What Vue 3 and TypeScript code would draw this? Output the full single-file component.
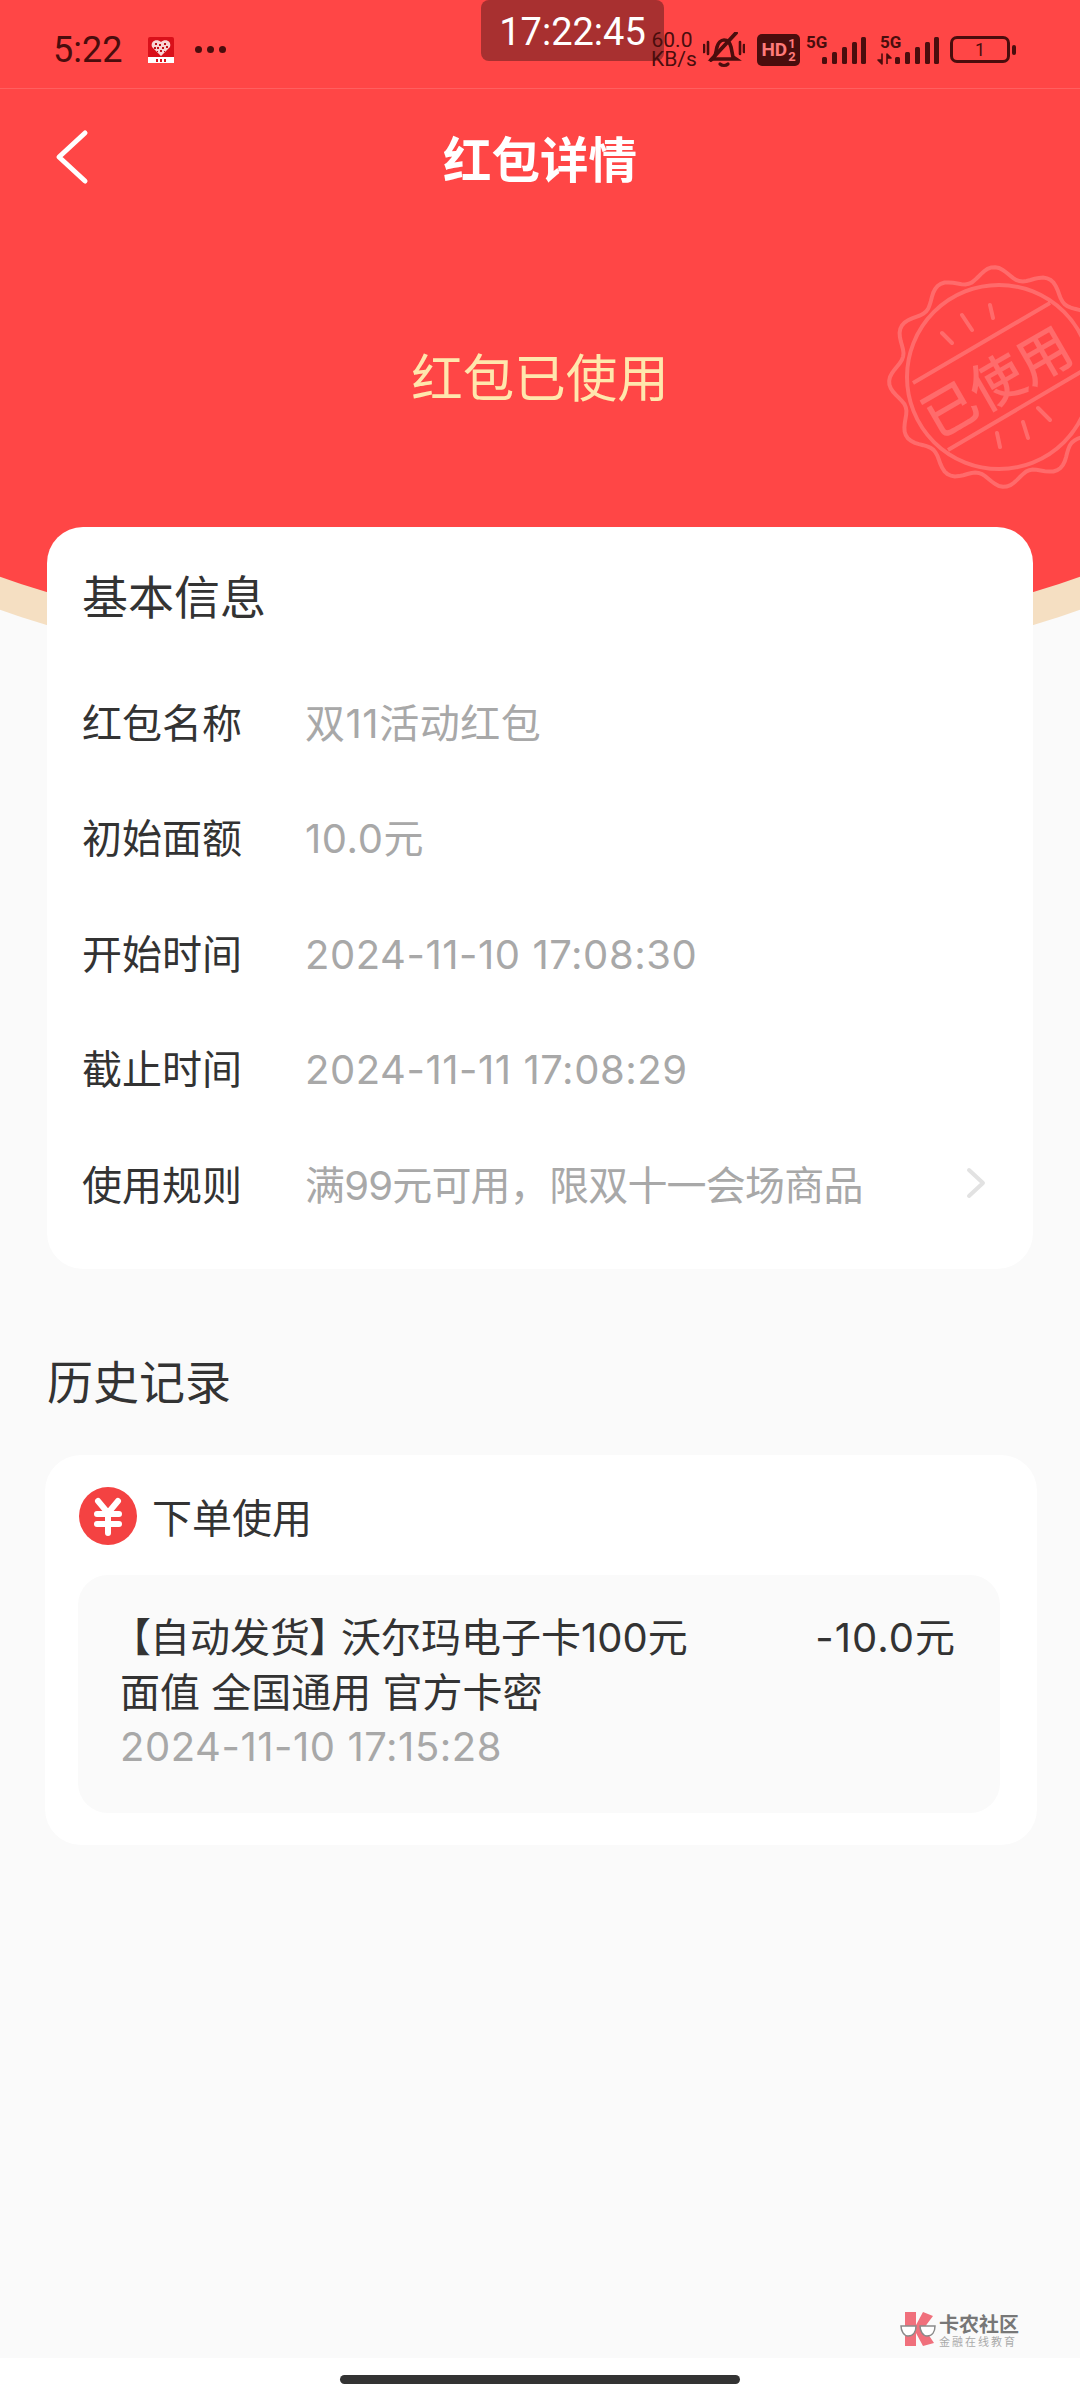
<script setup lang="ts">
const infoRows = [
  { label: '红包名称', value: '双11活动红包' },
  { label: '初始面额', value: '10.0元' },
  { label: '开始时间', value: '2024-11-10 17:08:30' },
  { label: '截止时间', value: '2024-11-11 17:08:29' },
  { label: '使用规则', value: '满99元可用，限双十一会场商品', more: true },
]

// wavy seal outline for the stamp
const sealPath = (() => {
  const pts: string[] = []
  for (let i = 0; i <= 180; i++) {
    const a = (i / 180) * Math.PI * 2
    const r = 104 + 6 * Math.cos(a * 12 + 0.6)
    const x = 120 + r * Math.cos(a)
    const y = 120 + r * Math.sin(a)
    pts.push(`${i ? 'L' : 'M'}${x.toFixed(1)} ${y.toFixed(1)}`)
  }
  return pts.join(' ') + ' Z'
})()

const signalBars = [
  { x: 16, h: 7 },
  { x: 26, h: 12 },
  { x: 36, h: 17 },
  { x: 46, h: 22 },
  { x: 55, h: 27 },
]
</script>

<template>
  <div class="page">
    <div class="hero">
      <div class="hero-cream"></div>
      <div class="hero-red"></div>
    </div>

    <div class="clock-overlay">17:22:45</div>

    <div class="statusbar">
      <div class="status-left">
        <span class="status-time">5:22</span>
        <svg class="app-badge" width="26" height="26" viewBox="0 0 26 26">
          <rect width="26" height="26" rx="2" fill="#d9101a" />
          <rect y="20" width="26" height="6" fill="#fff" />
          <path d="M13 19 L4 10 C2 4 9 1 13 5 C17 1 24 4 22 10 Z" fill="#f8d4d4" />
          <path d="M7 6h2v2H7zM11 7h2v2h-2zM16 6h2v2h-2zM9 10h2v2H9zM14 10h2v2h-2zM18 9h2v2h-2zM6 10h2v2H6zM12 13h2v2h-2zM9 14h1v1H9zM16 14h1v1h-1z" fill="#c01018" />
          <path d="M8 22h2v3H8zM12 22h2v3h-2zM16 22h2v3h-2z" fill="#d9101a" />
        </svg>
        <span class="status-dots"><i></i><i></i><i></i></span>
      </div>
      <div class="status-right">
        <div class="netspeed"><span>60.0</span><span>KB/s</span></div>
        <svg class="mute" width="42" height="36" viewBox="0 0 42 36" fill="none" stroke="#4a0d0d" stroke-linecap="round">
          <path d="M11 25c2-2 2-6 3-10 1-4 4-7 7-7 4 0 6 3 7 7l2 10 3 2H9z" stroke-width="3.6" />
          <path d="M17 32c2 2 6 2 8 0" stroke-width="3.2" />
          <path d="M8 28L33 1" stroke-width="3.8" />
          <path d="M1 13v7M5 10v12M37 10v12M41 13v7" stroke-width="2.6" />
        </svg>
        <div class="hd"><b>HD</b><span><em>1</em><em>2</em></span></div>
        <svg class="signal" width="60" height="32" viewBox="0 0 60 32">
          <text x="0" y="14" class="five-g">5G</text>
          <rect v-for="bar in signalBars" :key="bar.x" :x="bar.x" :y="30 - bar.h" width="5" :height="bar.h" rx="1.5" />
        </svg>
        <svg class="signal" width="60" height="32" viewBox="0 0 60 32">
          <text x="2" y="14" class="five-g">5G</text>
          <path d="M4 20v10l-4-4h4zM9 20v10M9 20l4 4H9z" stroke="#4a0d0d" stroke-width="1.6" stroke-linejoin="round" fill="#4a0d0d" />
          <rect v-for="bar in signalBars" :key="bar.x" :x="bar.x + 1" :y="30 - bar.h" width="5" :height="bar.h" rx="1.5" />
        </svg>
        <div class="battery"><span class="battery-body">1</span><i></i></div>
      </div>
    </div>

    <header class="navbar">
      <svg class="back" width="40" height="56" viewBox="0 0 40 56" fill="none" stroke="#fff" stroke-width="5" stroke-linecap="round" stroke-linejoin="round">
        <path d="M31 4 L5 28 L31 52" />
      </svg>
      <h1>红包详情</h1>
    </header>

    <div class="state">红包已使用</div>

    <svg class="stamp" width="240" height="240" viewBox="0 0 240 240" fill="none" stroke="#fff" stroke-opacity="0.2" stroke-width="4">
      <path :d="sealPath" />
      <circle cx="120" cy="120" r="92" />
      <path d="M34 126 L171 46 M69 193 L205 113" />
      <path d="M63 76l10 10M83 58l10 15M111 48l3 13M159 151l12 12M144 165l5 16M118 176l3 14" stroke-linecap="round" />
      <text x="116" y="122" class="stamp-text" transform="rotate(-30 116 122)" text-anchor="middle" dominant-baseline="central">已使用</text>
    </svg>

    <main class="content">
      <section class="card info-card">
        <h2>基本信息</h2>
        <div v-for="row in infoRows" :key="row.label" class="info-row">
          <span class="info-label">{{ row.label }}</span>
          <span class="info-value" :class="{ rule: row.more }">{{ row.value }}</span>
          <svg v-if="row.more" class="chevron" width="20" height="32" viewBox="0 0 20 32" fill="none" stroke="#e2e2e2" stroke-width="4" stroke-linecap="round" stroke-linejoin="round">
            <path d="M3 3 L17 16 L3 29" />
          </svg>
        </div>
      </section>

      <h2 class="history-title">历史记录</h2>

      <section class="card history-card">
        <div class="history-head">
          <svg width="58" height="58" viewBox="0 0 58 58">
            <circle cx="29" cy="29" r="29" fill="#f44242" />
            <path d="M19 14 L29 26 L39 14 M18 27 H40 M18 37 H40 M29 26 V46" fill="none" stroke="#fff" stroke-width="6" stroke-linecap="round" stroke-linejoin="round" />
          </svg>
          <span>下单使用</span>
        </div>
        <div class="record">
          <div class="record-main">
            <div class="record-name"><span class="bracket-open">【</span>自动发货<span class="bracket-close">】</span>沃尔玛电子卡100元面值 全国通用 官方卡密</div>
            <div class="record-time">2024-11-10 17:15:28</div>
          </div>
          <div class="record-amount">-10.0元</div>
        </div>
      </section>
    </main>

    <div class="watermark">
      <svg width="36" height="36" viewBox="0 0 36 36">
        <path d="M5 0h11v13L23 0l10 4-9 12 10 15-11 3-7-13v13H5z" fill="#f0707c" />
        <path d="M1 14 H16 C16 20 13 24 8 24 C4 24 1 19 1 14 Z M20 14 H35 C35 20 32 24 27 24 C23 24 20 19 20 14 Z" fill="#fff" stroke="#8a8a8a" stroke-width="1.5" />
      </svg>
      <div class="wm-text"><b>卡农社区</b><small>金融在线教育</small></div>
    </div>

    <footer class="gesture"><i></i></footer>
  </div>
</template>

<style scoped>
.page {
  position: relative;
  width: 1080px;
  height: 2400px;
  overflow: hidden;
  display: flex;
  flex-direction: column;
  background: #fafafa;
  font-family: Inter, "Noto Sans CJK SC", sans-serif;
}
.hero {
  position: absolute;
  top: 0;
  left: 0;
  width: 1080px;
  height: 700px;
  overflow: hidden;
}
.hero-cream,
.hero-red {
  position: absolute;
  top: 0;
  left: -160px;
  width: 1400px;
  border-radius: 0 0 700px 700px / 0 0 210px 210px;
}
.hero-cream {
  height: 686px;
  background: #f5dfc2;
}
.hero-red {
  height: 653px;
  background: #ff4646;
}
.clock-overlay {
  position: absolute;
  top: 0;
  left: 481px;
  width: 183px;
  height: 61px;
  border-radius: 8px;
  background: #a83030;
  color: #fff;
  font-family: Roboto, sans-serif;
  font-size: 38px;
  line-height: 64px;
  text-align: center;
}
.statusbar {
  position: relative;
  height: 89px;
  flex: none;
  display: flex;
  justify-content: space-between;
  align-items: center;
  padding: 11px 64px 0 53px;
  box-sizing: border-box;
  border-bottom: 1px solid rgba(255, 255, 255, 0.14);
  color: #4a0d0d;
}
.status-left {
  display: flex;
  align-items: center;
}
.status-time {
  width: 95px;
  font-family: Roboto, sans-serif;
  font-size: 36px;
}
.app-badge {
  margin-right: 21px;
}
.status-dots {
  display: flex;
  gap: 5px;
}
.status-dots i {
  width: 7px;
  height: 7px;
  border-radius: 50%;
  background: #4a0d0d;
}
.status-right {
  display: flex;
  align-items: center;
}
.netspeed {
  display: flex;
  flex-direction: column;
  width: 42px;
  margin-right: 10px;
  font-family: Roboto, sans-serif;
  font-size: 21px;
  line-height: 19px;
  text-align: center;
  white-space: nowrap;
}
.hd {
  display: flex;
  align-items: center;
  justify-content: center;
  gap: 1px;
  width: 43px;
  height: 32px;
  margin-left: 12px;
  margin-right: 6px;
  border-radius: 5px;
  background: #4a0d0d;
  color: #ff7a7a;
  font-family: Roboto, sans-serif;
  font-size: 19px;
}
.hd span {
  display: flex;
  flex-direction: column;
  font-size: 13px;
  line-height: 13px;
  font-weight: 700;
}
.hd em {
  font-style: normal;
}
.signal {
  margin-right: 12px;
  fill: #4a0d0d;
  overflow: visible;
}
.five-g {
  font-family: Roboto, sans-serif;
  font-size: 17px;
  font-weight: 700;
}
.battery {
  display: flex;
  align-items: center;
  gap: 2px;
}
.battery-body {
  width: 60px;
  height: 27px;
  border: 3px solid #4a0d0d;
  border-radius: 7px;
  box-sizing: border-box;
  font-family: Roboto, sans-serif;
  font-size: 18px;
  line-height: 21px;
  text-align: center;
}
.battery i {
  width: 4px;
  height: 10px;
  border-radius: 2px;
  background: #4a0d0d;
}
.navbar {
  position: relative;
  height: 138px;
  flex: none;
  display: flex;
  align-items: center;
  justify-content: center;
}
.navbar h1 {
  margin: 0 0 3px;
  color: #fff;
  font-size: 48.5px;
  font-weight: 700;
  font-family: "Noto Sans CJK SC", sans-serif;
}
.back {
  position: absolute;
  left: 54px;
  top: 40px;
}
.state {
  position: relative;
  margin-top: 103px;
  height: 90px;
  flex: none;
  color: #ffe7ad;
  font-size: 51.5px;
  line-height: 90px;
  text-align: center;
  font-family: "Noto Sans CJK SC", sans-serif;
}
.stamp {
  position: absolute;
  left: 879px;
  top: 257px;
}
.stamp-text {
  fill: #fff;
  fill-opacity: 0.2;
  stroke: none;
  font-family: "Noto Sans CJK SC", sans-serif;
  font-size: 54px;
  font-weight: 500;
}
.content {
  position: relative;
  margin-top: 107px;
  padding: 0 47px;
  display: flex;
  flex-direction: column;
}
.card {
  background: #fff;
  border-radius: 36px;
}
.info-card {
  height: 742px;
  padding: 35px 35px 0;
  box-sizing: border-box;
}
.info-card h2 {
  margin: 0 0 37px;
  color: #333;
  font-size: 46px;
  font-weight: 400;
  line-height: 64px;
  font-family: "Noto Sans CJK SC", sans-serif;
}
.info-row {
  display: flex;
  align-items: center;
  height: 115.5px;
  font-size: 40px;
}
.info-label {
  width: 223px;
  flex: none;
  color: #333;
  line-height: 56px;
  font-family: "Noto Sans CJK SC", sans-serif;
}
.info-value {
  flex: 1;
  padding-top: 6px;
  color: #a8a8a8;
  line-height: 56px;
  letter-spacing: 0.55px;
}
.info-value.rule {
  letter-spacing: -0.8px;
}
.chevron {
  margin-right: 12px;
}
.history-title {
  margin: 74px 0 0;
  color: #333;
  font-size: 46px;
  line-height: 72px;
  font-weight: 400;
  font-family: "Noto Sans CJK SC", sans-serif;
}
.history-card {
  margin: 40px -4px 0 -2px;
  padding: 32px 37px 32px 33px;
}
.history-head {
  display: flex;
  align-items: center;
  gap: 15px;
  margin-left: 1px;
  color: #333;
  font-size: 40px;
  font-family: "Noto Sans CJK SC", sans-serif;
}
.record {
  display: flex;
  justify-content: space-between;
  margin-top: 30px;
  padding: 36px 44px 0 42px;
  height: 238px;
  box-sizing: border-box;
  border-radius: 30px;
  background: #fafafa;
  font-size: 40px;
  line-height: 54.5px;
}
.record-main {
  width: 590px;
}
.record-name {
  color: #333;
}
.bracket-open,
.bracket-close {
  font-feature-settings: "palt";
}
.bracket-open {
  margin-left: 10px;
}
.bracket-close {
  margin-right: 11px;
}
.record-time {
  color: #a8a8a8;
  letter-spacing: 0.55px;
}
.record-amount {
  color: #333;
  white-space: nowrap;
  letter-spacing: 1px;
}
.watermark {
  position: absolute;
  left: 900px;
  top: 2312px;
  display: flex;
  align-items: center;
  gap: 3px;
}
.wm-text {
  display: flex;
  flex-direction: column;
  font-family: "Noto Sans CJK SC", sans-serif;
  color: #777;
}
.wm-text b {
  font-size: 20px;
  line-height: 22px;
}
.wm-text small {
  font-size: 11px;
  line-height: 13px;
  color: #aaa;
  letter-spacing: 2px;
}
.gesture {
  position: absolute;
  left: 0;
  right: 0;
  bottom: 0;
  height: 42px;
  background: #fff;
}
.gesture i {
  position: absolute;
  left: 340px;
  top: 17px;
  width: 400px;
  height: 9px;
  border-radius: 5px;
  background: #333;
}
</style>
